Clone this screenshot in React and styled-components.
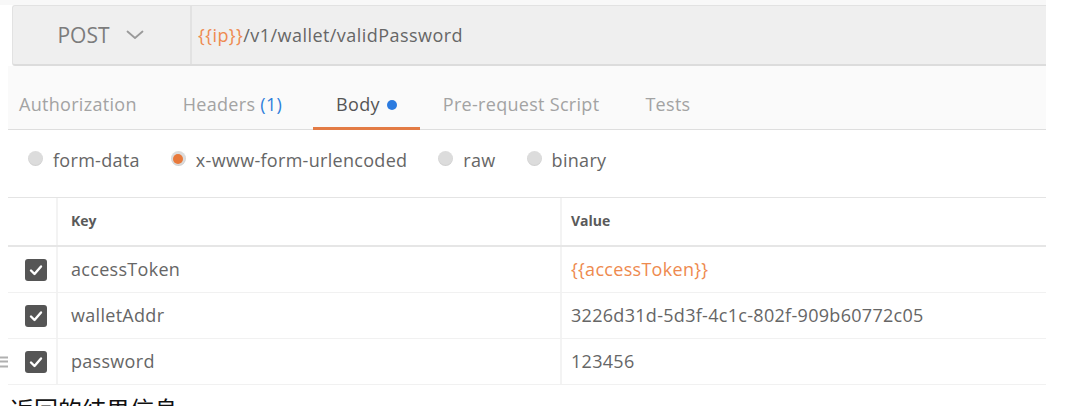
import React from "react";
import styled, { createGlobalStyle } from "styled-components";

const GlobalStyle = createGlobalStyle`
  html, body {
    margin: 0;
    padding: 0;
    background: #ffffff;
    overflow: hidden;
  }
  body {
    font-family: "Open Sans", "Noto Sans", "Noto Sans CJK SC", sans-serif;
  }
`;

const Page = styled.div`
  width: 1066px;
  height: 406px;
  overflow: hidden;
  background: #ffffff;
`;

const TopStrip = styled.div`
  height: 5px;
  width: 1046px;
  background: #f8f8f8;
`;

const Content = styled.div`
  width: 1038px;
  margin-left: 8px;
`;

const UrlBar = styled.div`
  display: flex;
  height: 58px;
  margin-left: 4px;
  background: #efefef;
  border-top: 1px solid #e2e2e2;
  border-bottom: 2px solid #dcdcdc;
  border-left: 1px solid #e2e2e2;
  border-radius: 3px 0 0 3px;
`;

const Method = styled.div`
  width: 175px;
  display: flex;
  align-items: center;
  justify-content: center;
  gap: 16px;
  border-right: 2px solid #e2e2e2;
  font-size: 21px;
  color: #7c7c7c;
  padding-right: 2px;
`;

const UrlText = styled.div`
  display: flex;
  align-items: center;
  padding-left: 6px;
  font-size: 18px;
  letter-spacing: 0.45px;
  color: #666;
`;

const Var = styled.span`
  color: #ee8a4f;
`;

const TabBar = styled.div`
  display: flex;
  height: 63px;
  background: #fafafa;
  border-bottom: 1px solid #dedede;
`;

const Tab = styled.div`
  position: relative;
  display: flex;
  align-items: center;
  gap: 7px;
  padding: 13px 23px 0;
  font-size: 18px;
  letter-spacing: 0.3px;
  color: ${(p) => (p.$active ? "#555" : "#a3a3a3")};
  &:first-child {
    padding-left: 11px;
  }
  ${(p) =>
    p.$active &&
    `&::after {
      content: "";
      position: absolute;
      left: 0;
      right: 0;
      bottom: -1px;
      height: 3px;
      background: #e37b45;
    }`}
`;

const Count = styled.span`
  color: #2f7fdc;
  margin-right: 8px;
`;

const Dot = styled.span`
  width: 10px;
  height: 10px;
  border-radius: 50%;
  background: #2b7be0;
  margin-top: 1px;
`;

const RadioRow = styled.div`
  display: flex;
  align-items: center;
  height: 67px;
  padding-left: 20px;
  gap: 31px;
  border-bottom: 1px solid #e4e4e4;
`;

const RadioItem = styled.label`
  display: flex;
  align-items: center;
  gap: 10px;
  font-size: 18px;
  letter-spacing: 0.3px;
  color: #666;
  padding-bottom: 7px;
`;

const RadioCircle = styled.span`
  width: 15px;
  height: 15px;
  border-radius: 50%;
  background: #dcdcdc;
  box-shadow: inset 0 -1px 1px rgba(0, 0, 0, 0.06);
  display: flex;
  align-items: center;
  justify-content: center;
  margin-top: -3px;
  &::after {
    content: "";
    width: ${(p) => (p.$on ? "10px" : "0")};
    height: ${(p) => (p.$on ? "10px" : "0")};
    border-radius: 50%;
    background: #e8793b;
  }
`;

const Table = styled.div`
  display: flex;
  flex-direction: column;
`;

const Row = styled.div`
  display: grid;
  grid-template-columns: 50px 504px 1fr;
  height: ${(p) => (p.$head ? "47px" : "45px")};
  border-bottom: ${(p) => (p.$head ? "2px solid #e6e6e6" : "1px solid #f1f1f1")};
`;

const Cell = styled.div`
  position: relative;
  display: flex;
  align-items: center;
  justify-content: ${(p) => (p.$check ? "flex-end" : "flex-start")};
  padding: ${(p) => (p.$check ? "0 9px 0 0" : p.$value ? "0 0 2px 9px" : "0 0 2px 13px")};
  font-size: ${(p) => (p.$head ? "14px" : "18px")};
  letter-spacing: ${(p) => (p.$head ? "0" : "0.3px")};
  font-weight: ${(p) => (p.$head ? 700 : 400)};
  color: ${(p) => (p.$orange ? "#ee8a4f" : p.$head ? "#5a5a5a" : "#666")};
  border-right: ${(p) => (p.$last ? "none" : "2px solid #f3f3f3")};
`;

const Checkbox = styled.span`
  width: 22px;
  height: 22px;
  border-radius: 3px;
  background: #555;
  display: flex;
  align-items: center;
  justify-content: center;
`;

const Handle = styled.span`
  position: absolute;
  left: -8px;
  top: 50%;
  transform: translateY(-50%);
  width: 8px;
  height: 11px;
  display: flex;
  flex-direction: column;
  justify-content: space-between;
  span {
    height: 2px;
    background: #b0b0b0;
  }
`;

const Caption = styled.div`
  margin-top: 10px;
  margin-left: 2px;
  font-size: 24px;
  color: #111;
  font-family: "Noto Sans CJK SC", "Noto Sans", sans-serif;
  line-height: 1.2;
`;

const Chevron = () => (
  <svg width="18" height="10" viewBox="0 0 18 10" fill="none">
    <path d="M1.5 1.5 L9 8 L16.5 1.5" stroke="#9a9a9a" strokeWidth="1.8" strokeLinecap="round" strokeLinejoin="round" />
  </svg>
);

const Tick = () => (
  <svg width="14" height="12" viewBox="0 0 14 12" fill="none">
    <path d="M2 6.5 L5.5 10 L12 2.5" stroke="#fff" strokeWidth="2.4" strokeLinecap="round" strokeLinejoin="round" />
  </svg>
);

const params = [
  { key: "accessToken", value: "{{accessToken}}", orange: true },
  { key: "walletAddr", value: "3226d31d-5d3f-4c1c-802f-909b60772c05" },
  { key: "password", value: "123456", handle: true },
];

export default function App() {
  return (
    <Page>
      <GlobalStyle />
      <TopStrip />
      <Content>
        <UrlBar>
          <Method>
            POST
            <Chevron />
          </Method>
          <UrlText>
            <Var>{"{{ip}}"}</Var>/v1/wallet/validPassword
          </UrlText>
        </UrlBar>

        <TabBar>
          <Tab>Authorization</Tab>
          <Tab>
            <span>
              Headers <Count>(1)</Count>
            </span>
          </Tab>
          <Tab $active>
            Body <Dot />
          </Tab>
          <Tab>Pre-request Script</Tab>
          <Tab>Tests</Tab>
        </TabBar>

        <RadioRow>
          <RadioItem>
            <RadioCircle />
            form-data
          </RadioItem>
          <RadioItem>
            <RadioCircle $on />
            x-www-form-urlencoded
          </RadioItem>
          <RadioItem>
            <RadioCircle />
            raw
          </RadioItem>
          <RadioItem>
            <RadioCircle />
            binary
          </RadioItem>
        </RadioRow>

        <Table>
          <Row $head>
            <Cell $check />
            <Cell $head>Key</Cell>
            <Cell $head $value $last>
              Value
            </Cell>
          </Row>
          {params.map((p) => (
            <Row key={p.key}>
              <Cell $check>
                {p.handle && (
                  <Handle>
                    <span />
                    <span />
                    <span />
                  </Handle>
                )}
                <Checkbox>
                  <Tick />
                </Checkbox>
              </Cell>
              <Cell>{p.key}</Cell>
              <Cell $value $last $orange={p.orange}>
                {p.value}
              </Cell>
            </Row>
          ))}
        </Table>

        <Caption>返回的结果信息</Caption>
      </Content>
    </Page>
  );
}
